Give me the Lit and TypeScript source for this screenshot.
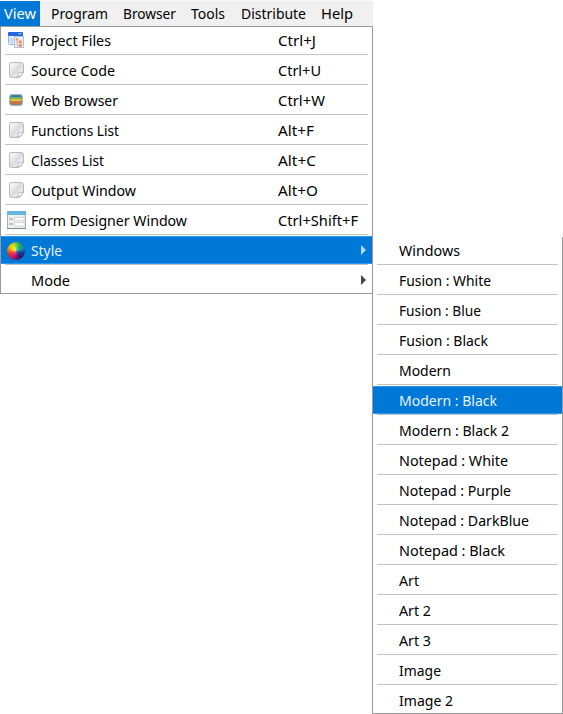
import { LitElement, html, css, svg, nothing } from "lit";
import { customElement, property } from "lit/decorators.js";
import { classMap } from "lit/directives/class-map.js";

type Entry = { label: string; w: number; icon?: string; keys?: string; kw?: number; sub?: boolean; active?: boolean };

const bar = [
  { label: "View", w: 32, cell: 40 },
  { label: "Program", w: 57, cell: 78 },
  { label: "Browser", w: 53, cell: 63 },
  { label: "Tools", w: 34, cell: 54 },
  { label: "Distribute", w: 65, cell: 77 },
  { label: "Help", w: 32, cell: 50 },
];

const viewMenu: Entry[] = [
  { label: "Project Files", w: 80, icon: "project", keys: "Ctrl+J", kw: 38 },
  { label: "Source Code", w: 84, icon: "page", keys: "Ctrl+U", kw: 43 },
  { label: "Web Browser", w: 87, icon: "web", keys: "Ctrl+W", kw: 47 },
  { label: "Functions List", w: 88, icon: "page", keys: "Alt+F", kw: 36 },
  { label: "Classes List", w: 73, icon: "page", keys: "Alt+C", kw: 38 },
  { label: "Output Window", w: 105, icon: "page", keys: "Alt+O", kw: 40 },
  { label: "Form Designer Window", w: 156, icon: "form", keys: "Ctrl+Shift+F", kw: 80 },
  { label: "Style", w: 31, icon: "wheel", sub: true, active: true },
  { label: "Mode", w: 39, sub: true },
];

const styleMenu: Entry[] = [
  { label: "Windows", w: 61 },
  { label: "Fusion : White", w: 92 },
  { label: "Fusion : Blue", w: 82 },
  { label: "Fusion : Black", w: 89 },
  { label: "Modern", w: 52 },
  { label: "Modern : Black", w: 98, active: true },
  { label: "Modern : Black 2", w: 110 },
  { label: "Notepad : White", w: 109 },
  { label: "Notepad : Purple", w: 112 },
  { label: "Notepad : DarkBlue", w: 130 },
  { label: "Notepad : Black", w: 106 },
  { label: "Art", w: 20 },
  { label: "Art 2", w: 32 },
  { label: "Art 3", w: 32 },
  { label: "Image", w: 42 },
  { label: "Image 2", w: 54 },
];

const icons: Record<string, unknown> = {
  project: svg`<rect x="3.5" y="2.5" width="14" height="12" rx="1" fill="#f5f9ff" stroke="#8fb2ee"/>
    <rect x="3" y="2" width="15" height="4" rx="1" fill="#2464dc"/><path d="M13 3.7h3.5" stroke="#9cc2ff" stroke-width="1.2"/>
    <rect x="4.5" y="7.5" width="4" height="6" fill="#c3d8fa"/>
    <rect x="9.5" y="6.5" width="9" height="11" fill="#e9effa" stroke="#9fb2d6" stroke-width=".8"/>
    <path d="M12 9.5v6M12 12h3M12 15.5h3" stroke="#b9a79c" stroke-width=".8" fill="none"/>
    <rect x="10.8" y="8" width="2.4" height="2.4" fill="#f3a458"/><rect x="14" y="10.5" width="2.8" height="2.8" fill="#f08f40"/><rect x="14" y="14" width="2.8" height="2.8" fill="#f08f40"/>`,
  page: svg`<defs><linearGradient id="g" x1="0" y1="0" x2="1" y2="1"><stop stop-color="#fafafa"/><stop offset=".3" stop-color="#ececec"/><stop offset=".5" stop-color="#dadada"/><stop offset=".8" stop-color="#f4f4f4"/></linearGradient></defs>
    <path d="M6 2.5H16Q18.5 2.5 18.5 5V11.5Q17 17.3 12 17.5H6.5Q4.5 17.5 4.5 15.5V4.5Q4.5 2.5 6 2.5Z" fill="url(#g)" stroke="#b9b9b9"/>
    <path d="M11.5 17.2Q13.8 16 13.3 12.8Q16 13.5 18.3 11.5Q17 16.5 11.5 17.2Z" fill="#fff" stroke="#a3a3a3" stroke-width=".7"/>`,
  web: svg`<rect x="4.5" y="4.5" width="13" height="11" rx="2.5" fill="#728895" stroke="#a3b4c0"/>
    <path d="M6 6.2h10" stroke="#26809b" stroke-width="1.6"/><path d="M5.5 7.9h11" stroke="#68ba70" stroke-width="1.6"/>
    <path d="M5.5 10h11" stroke="#f8bd25" stroke-width="2.4"/><path d="M6 12.9h10" stroke="#ec672c" stroke-width="1.8"/>`,
  form: svg`<rect x="2.5" y="1.5" width="18" height="17" fill="#eeeeec" stroke="#96b3c1"/>
    <rect x="2" y="1" width="19" height="4" fill="#65b8dd"/><path d="M2 18.5h19" stroke="#718f9d"/>
    <path d="M4 9h4M4 14h4" stroke="#c2c2c2" stroke-width="2"/>
    <rect x="9.5" y="7.3" width="9.5" height="3.5" fill="#fff" stroke="#cdcdcd" stroke-width=".7"/><rect x="9.5" y="12.5" width="9.5" height="3.5" fill="#fff" stroke="#cdcdcd" stroke-width=".7"/>`,
};

@customElement("fit-text")
class FitText extends LitElement {
  @property() text = "";
  @property({ type: Number }) width = 0;
  static styles = css`
    :host { display: block; flex: none; }
    svg { display: block; height: 26px; overflow: visible; }
    text { font: 14.6px "Noto Sans", "Open Sans", sans-serif; fill: currentColor; }
  `;
  render() {
    return html`<svg width=${this.width}><text x="0" y="18" textLength=${this.width} lengthAdjust="spacingAndGlyphs">${this.text}</text></svg>`;
  }
}

@customElement("app-root")
class AppRoot extends LitElement {
  static styles = css`
    :host { display: block; width: 563px; height: 714px; background: #fff; color: #000; overflow: hidden; }
    * { box-sizing: border-box; }
    .bar { display: flex; width: 373px; height: 26px; background: #f0f0f0; border-top: 1px solid #fafafa; }
    .tab { display: flex; justify-content: center; height: 25px; }
    .tab.on { background: #0078d7; color: #fff; }
    .body { display: flex; align-items: flex-start; }
    .panel { border: 1px solid #999; }
    .view { width: 373px; height: 268px; }
    .styles { width: 191px; height: 477px; margin: 211px 0 0 -1px; border-top: 0; }
    .item { display: flex; align-items: center; height: 28px; padding-top: 2px; }
    .item:first-child { height: 27px; padding-top: 0; }
    .sep { height: 1px; margin: 0 4px 1px; background: #c3c3c3; }
    .item.on { background: #0078d7; color: #e6f2fc; border: solid #2d96ee; border-width: 1px 0; }
    .slot { width: 30px; height: 22px; padding-left: 4px; flex: none; }
    .slot svg { display: block; }
    .styles .slot { width: 26px; }
    .name { flex: 1; }
    .keys { width: 94px; }
    .arrow { border: solid transparent; border-width: 5px 0 5px 5px; border-left-color: #444; margin: 0 6px 2px 0; }
    .on .arrow { border-left-color: #b5daf8; }
    .wheel { width: 18px; height: 18px; margin: 2px 0 0 2px; border-radius: 50%;
      background: radial-gradient(circle, #fff5 0, #fff0 35%, #0003 75%), conic-gradient(#8edb35, #35c35f 25deg, #159fb4 65deg, #163d99 110deg, #2b1b70 140deg, #8c187d 175deg, #e2187a 210deg, #f03b24 245deg, #ff8b13 275deg, #ffdd1a 305deg, #e2ea20 335deg, #8edb35); }
  `;

  icon(name?: string) {
    if (!name) return nothing;
    if (name === "wheel") return html`<div class="wheel"></div>`;
    return html`<svg width="22" height="22" viewBox="0 0 22 22">${icons[name]}</svg>`;
  }

  rows(items: Entry[]) {
    return items.map((e, i) => html`
      <div class=${classMap({ item: true, on: !!e.active })}>
        <div class="slot">${this.icon(e.icon)}</div>
        <fit-text class="name" .text=${e.label} .width=${e.w}></fit-text>
        ${e.keys ? html`<div class="keys"><fit-text .text=${e.keys} .width=${e.kw ?? 0}></fit-text></div>` : nothing}
        ${e.sub ? html`<i class="arrow"></i>` : nothing}
      </div>
      ${i < items.length - 1 ? html`<div class="sep"></div>` : nothing}`);
  }

  render() {
    return html`
      <nav class="bar">${bar.map((t, i) => html`
        <div class=${classMap({ tab: true, on: i === 0 })} style="width:${t.cell}px"><fit-text .text=${t.label} .width=${t.w}></fit-text></div>`)}
      </nav>
      <div class="body">
        <div class="panel view">${this.rows(viewMenu)}</div>
        <div class="panel styles">${this.rows(styleMenu)}</div>
      </div>`;
  }
}
